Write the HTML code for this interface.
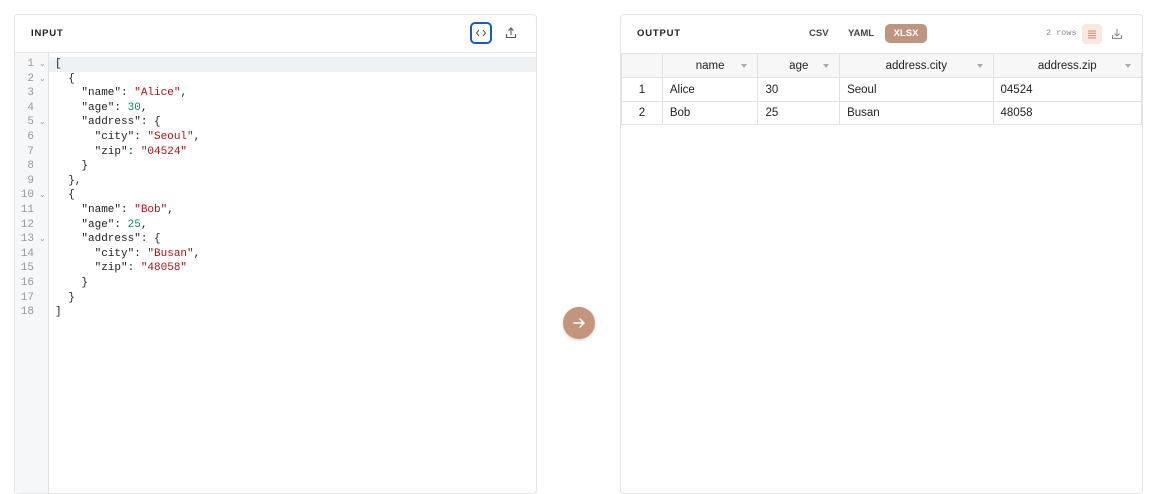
<!DOCTYPE html>
<html><head><meta charset="utf-8"><style>
*{box-sizing:border-box;margin:0;padding:0}
body{width:1158px;height:480px;background:#fff;font-family:"Liberation Sans",sans-serif;position:relative;overflow:hidden}
.panel{position:absolute;top:14px;height:480px;border:1px solid #e5e5e5;border-radius:4px;background:#fff}
.hdr{height:38px;border-bottom:1px solid #e8e8e8;position:relative}
.title{position:absolute;left:16px;top:13px;font-size:9.5px;font-weight:bold;letter-spacing:.8px;color:#222}
.gutter{position:absolute;left:0;top:38px;width:34px;bottom:0;background:#f6f7f8;border-right:1px solid #e2e2e2}
.code{position:absolute;left:0;top:42px;font-family:"Liberation Mono",monospace;font-size:11px;color:#222}
.ln{height:14.6px;line-height:14.6px;white-space:pre;position:relative}
.ln .n{position:absolute;left:0;width:19px;text-align:right;color:#999}
.ln .f{position:absolute;left:24px;color:#999;font-size:8px;top:1px}
.ln .t{position:absolute;left:40px}
.s{color:#a31515}.num{color:#098658}
.active{position:absolute;left:34px;right:0;top:42px;height:14.6px;background:#eef1f3}
table{position:absolute;left:0;top:38px;border-collapse:collapse;font-size:11.5px;color:#222}
td,th{border:1px solid #e2e2e2;height:23.5px;padding:1px 7px 0;font-weight:normal;text-align:left}
th{background:#f7f7f7;text-align:center;position:relative;height:24px}
th .a{position:absolute;right:10px;top:10px;width:0;height:0;border-left:3px solid transparent;border-right:3px solid transparent;border-top:4px solid #aaa}
td.r{text-align:center}
</style></head><body>
<div class="panel" style="left:14px;width:523px">
  <div class="hdr"><div class="title">INPUT</div>
    <div style="position:absolute;left:455px;top:7px;width:22px;height:22px;border:2px solid #1a5bb5;border-radius:5px">
      <svg width="18" height="18" viewBox="0 0 18 18" style="position:absolute;left:0;top:0"><path d="M7 6 L4.5 9 L7 12 M11 6 L13.5 9 L11 12" fill="none" stroke="#555" stroke-width="1"/></svg></div>
    <svg width="14" height="14" viewBox="0 0 14 14" style="position:absolute;left:489px;top:11px"><path d="M7 2 V9 M4.5 4.5 L7 2 L9.5 4.5 M2.5 8 V11.5 H11.5 V8" fill="none" stroke="#555" stroke-width="1.1"/></svg>
  </div>
  <div class="gutter"></div>
  <div class="active"></div>
  <div class="code">
<div class="ln"><span class="n">1</span><span class="f">⌄</span><span class="t">[</span></div>
<div class="ln"><span class="n">2</span><span class="f">⌄</span><span class="t">  {</span></div>
<div class="ln"><span class="n">3</span><span class="t">    "name": <span class="s">"Alice"</span>,</span></div>
<div class="ln"><span class="n">4</span><span class="t">    "age": <span class="num">30</span>,</span></div>
<div class="ln"><span class="n">5</span><span class="f">⌄</span><span class="t">    "address": {</span></div>
<div class="ln"><span class="n">6</span><span class="t">      "city": <span class="s">"Seoul"</span>,</span></div>
<div class="ln"><span class="n">7</span><span class="t">      "zip": <span class="s">"04524"</span></span></div>
<div class="ln"><span class="n">8</span><span class="t">    }</span></div>
<div class="ln"><span class="n">9</span><span class="t">  },</span></div>
<div class="ln"><span class="n">10</span><span class="f">⌄</span><span class="t">  {</span></div>
<div class="ln"><span class="n">11</span><span class="t">    "name": <span class="s">"Bob"</span>,</span></div>
<div class="ln"><span class="n">12</span><span class="t">    "age": <span class="num">25</span>,</span></div>
<div class="ln"><span class="n">13</span><span class="f">⌄</span><span class="t">    "address": {</span></div>
<div class="ln"><span class="n">14</span><span class="t">      "city": <span class="s">"Busan"</span>,</span></div>
<div class="ln"><span class="n">15</span><span class="t">      "zip": <span class="s">"48058"</span></span></div>
<div class="ln"><span class="n">16</span><span class="t">    }</span></div>
<div class="ln"><span class="n">17</span><span class="t">  }</span></div>
<div class="ln"><span class="n">18</span><span class="t">]</span></div>
  </div>
</div>
<div style="position:absolute;left:563px;top:307px;width:32px;height:32px;border-radius:50%;background:#c4957d;box-shadow:0 1px 3px rgba(0,0,0,.2)">
  <svg width="32" height="32" viewBox="0 0 32 32"><path d="M11 16 H21 M17 12 L21 16 L17 20" fill="none" stroke="#fff" stroke-width="1.5" stroke-linecap="round"/></svg>
</div>
<div class="panel" style="left:620px;width:523px">
  <div class="hdr" style="border-bottom:none"><div class="title">OUTPUT</div>
    <div style="position:absolute;left:188px;top:13px;font-size:9.5px;font-weight:bold;color:#444">CSV</div>
    <div style="position:absolute;left:227px;top:13px;font-size:9.5px;font-weight:bold;color:#444">YAML</div>
    <div style="position:absolute;left:264px;top:9px;width:42px;height:19px;border-radius:5px;background:#c09580;color:#fff;font-size:9.5px;font-weight:bold;text-align:center;line-height:19px">XLSX</div>
    <div style="position:absolute;left:425px;top:13px;font-family:'Liberation Mono',monospace;font-size:8.5px;color:#888">2 rows</div>
    <div style="position:absolute;left:461px;top:9px;width:20px;height:20px;border-radius:4px;background:#f8e8e0">
      <svg width="20" height="20" viewBox="0 0 20 20"><path d="M6 7 H14 M6 9.3 H14 M6 11.6 H14 M6 13.9 H14" stroke="#c98a70" stroke-width="1"/></svg></div>
    <svg width="14" height="14" viewBox="0 0 14 14" style="position:absolute;left:489px;top:12px"><path d="M7 2 V9 M4.5 6.5 L7 9 L9.5 6.5 M2.5 8 V11.5 H11.5 V8" fill="none" stroke="#888" stroke-width="1"/></svg>
  </div>
  <table>
    <tr><th style="width:41px"></th><th style="width:96px">name<span class="a"></span></th><th style="width:82px">age<span class="a"></span></th><th style="width:154px">address.city<span class="a"></span></th><th style="width:149px">address.zip<span class="a"></span></th></tr>
    <tr><td class="r">1</td><td>Alice</td><td>30</td><td>Seoul</td><td>04524</td></tr>
    <tr><td class="r">2</td><td>Bob</td><td>25</td><td>Busan</td><td>48058</td></tr>
  </table>
</div>
</body></html>
